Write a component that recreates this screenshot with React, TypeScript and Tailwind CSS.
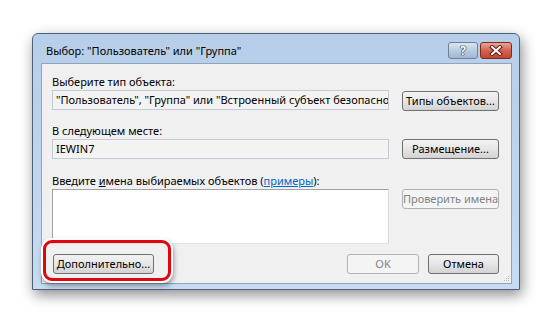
export default function App() {
  const btn =
    "h-[20px] whitespace-nowrap rounded-[3px] border border-[#707070] bg-gradient-to-b from-[#f3f3f3] via-[#e6e6e6] to-[#d3d3d3] text-[11px] leading-[18px] text-black flex items-center justify-center";
  const btnOff =
    "h-[20px] whitespace-nowrap rounded-[3px] border border-[#adb2b5] bg-[#f4f4f4] text-[11px] leading-[18px] text-[#838383] flex items-center justify-center";

  return (
    <div className="w-[554px] h-[324px] bg-white pt-[33px] pl-[32px] font-['Noto_Sans',sans-serif] text-[11px] text-black">
      {/* Window */}
      <div className="w-[488px] h-[257px] flex flex-col border border-[#4e617a] rounded-t-[6px] bg-gradient-to-b from-[#b7cee9] to-[#c7dbf1] pl-[8px] pr-[7px] pb-[5px] shadow-[2px_5px_14px_rgba(0,0,0,0.45)]">
        {/* Title bar */}
        <div className="h-[29px] flex items-start">
          <div className="pl-[5px] pt-[9px] text-[11px] leading-[16px] text-black">
            Выбор: "Пользователь" или "Группа"
          </div>
          <div className="ml-auto mt-[8px] flex gap-[2px]">
            <div className="w-[30px] h-[17px] rounded-[3px] border border-[#6d809a] bg-gradient-to-b from-[#dbe6f3] via-[#b9cbe0] to-[#a3b8d3] flex items-center justify-center text-[12px] font-bold leading-none text-white [text-shadow:0_0_1px_#223,0_0_1px_#223,0_0_1px_#223]">
              ?
            </div>
            <div className="w-[32px] h-[17px] rounded-[3px] border border-[#7a2c22] bg-gradient-to-b from-[#e9a596] via-[#d2644f] to-[#c4442d] flex items-center justify-center">
              <svg width="14" height="11" viewBox="0 0 14 11">
                <path d="M3 2 L11 9 M11 2 L3 9" stroke="#5b1a12" strokeWidth="4" strokeLinecap="square" />
                <path d="M3 2 L11 9 M11 2 L3 9" stroke="#ffffff" strokeWidth="2" strokeLinecap="square" />
              </svg>
            </div>
          </div>
        </div>

        {/* Client area */}
        <div className="relative flex-1 flex flex-col bg-[#f0f0f0] border border-[#8ea4bf] pl-[10px] pr-[12px] pt-[10px]">
          <div className="h-[16px] leading-[16px]">Выберите тип объекта:</div>
          <div className="flex items-start gap-[13px]">
            <div className="w-[337px] h-[20px] border border-[#c6cbd1] bg-[#f3f3f3] pl-[3px] leading-[18px] overflow-hidden whitespace-nowrap">
              "Пользователь", "Группа" или "Встроенный субъект безопасности"
            </div>
            <div className={btn + " w-[97px] mt-[1px]"}>Типы объектов...</div>
          </div>

          <div className="h-[16px] leading-[16px] mt-[12px]">В следующем месте:</div>
          <div className="flex items-start gap-[13px]">
            <div className="w-[337px] h-[20px] border border-[#c6cbd1] bg-[#f3f3f3] pl-[3px] leading-[18px]">
              IEWIN7
            </div>
            <div className={btn + " w-[97px]"}>Размещение...</div>
          </div>

          <div className="h-[16px] leading-[16px] mt-[14px]">
            Введите <span className="underline">и</span>мена выбираемых объектов (
            <span className="text-[#0066cc] underline">примеры</span>):
          </div>
          <div className="flex items-start gap-[13px]">
            <div className="w-[337px] h-[55px] bg-white border border-[#a3a3a3] border-r-[#d9d9d9] border-b-[#e3e3e3]" />
            <div className={btnOff + " w-[97px]"}>Проверить имена</div>
          </div>

          <div className="flex items-start mt-[10px]">
            <div className={btn + " w-[101px] ml-[1px]"}>Дополнительно...</div>
            <div className={btnOff + " w-[72px] ml-auto"}>OK</div>
            <div className={btn + " w-[71px] ml-[9px]"}>Отмена</div>
          </div>

          {/* red highlight annotation */}
          <div className="absolute left-[1px] top-[176px] w-[128px] h-[41px] rounded-[9px] border-[3px] border-[#e10510] shadow-[0_0_0_2px_#ffffff,1px_3px_5px_2px_rgba(0,0,0,0.35)]" />

          {/* size grip */}
          <svg className="absolute right-[1px] bottom-[1px]" width="8" height="8" viewBox="0 0 8 8">
            <rect x="6" y="2" width="1" height="1" fill="#b8b8b8" />
            <rect x="4" y="4" width="1" height="1" fill="#b8b8b8" />
            <rect x="6" y="4" width="1" height="1" fill="#b8b8b8" />
            <rect x="2" y="6" width="1" height="1" fill="#b8b8b8" />
            <rect x="4" y="6" width="1" height="1" fill="#b8b8b8" />
            <rect x="6" y="6" width="1" height="1" fill="#b8b8b8" />
          </svg>
        </div>
      </div>
    </div>
  );
}
